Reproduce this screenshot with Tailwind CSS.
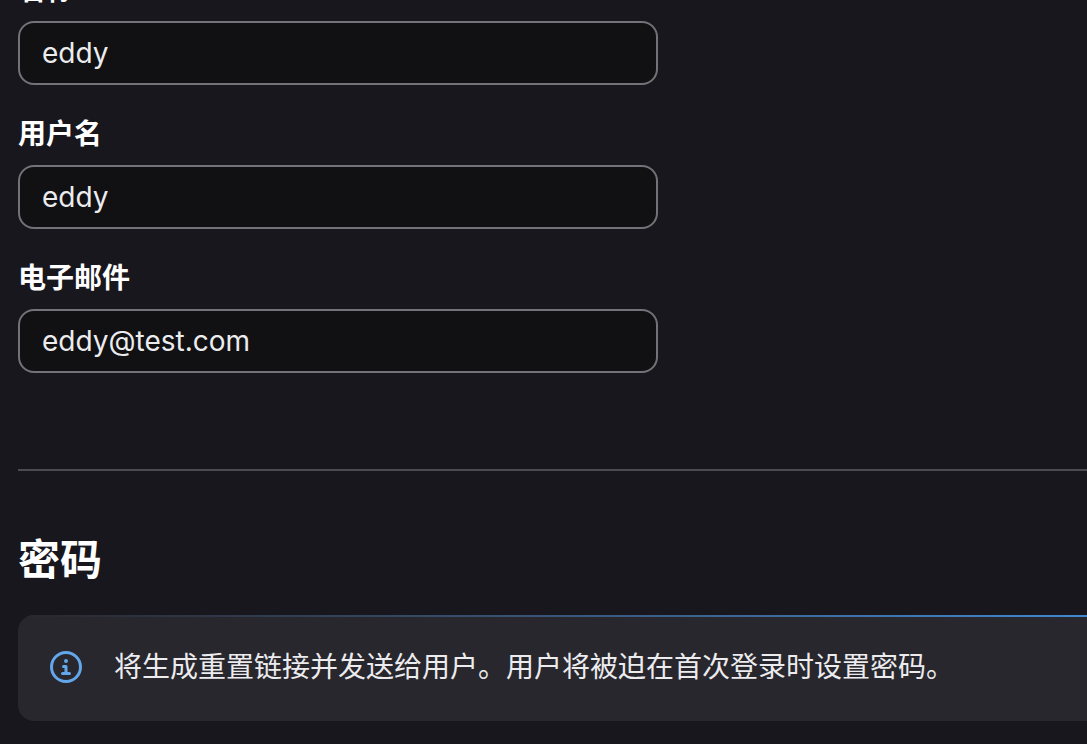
<!DOCTYPE html>
<html lang="zh-CN">
<head>
  <meta charset="UTF-8" />
  <meta name="viewport" content="width=device-width, initial-scale=1.0" />
  <title>用户</title>
  <script src="https://cdn.jsdelivr.net/npm/@tailwindcss/browser@4"></script>
</head>
<body class="bg-[#18171d] text-[#ececef] min-h-screen overflow-hidden font-['Inter','Noto_Sans_CJK_SC',sans-serif] text-[28px] leading-10">

  <main class="-mt-[30px] pl-[18px]">
    <form>
      <fieldset class="max-w-[640px] space-y-[29px]">
        <div>
          <label for="name" class="block mb-[11px] font-bold text-white">名称</label>
          <input type="text" id="name" name="name" value="eddy" class="block w-full h-16 px-[22px] bg-[#111113] border-2 border-[#737278] rounded-2xl" />
        </div>

        <div>
          <label for="username" class="block mb-[11px] font-bold text-white">用户名</label>
          <input type="text" id="username" name="username" value="eddy" class="block w-full h-16 px-[22px] bg-[#111113] border-2 border-[#737278] rounded-2xl" />
        </div>

        <div>
          <label for="email" class="block mb-[11px] font-bold text-white">电子邮件</label>
          <input type="email" id="email" name="email" value="eddy@test.com" class="block w-full h-16 px-[22px] bg-[#111113] border-2 border-[#737278] rounded-2xl" />
        </div>
      </fieldset>

      <section class="mt-24 pt-[65px] border-t-2 border-[#4c4b51]">
        <h2 class="text-[42px] leading-12 font-bold text-white">密码</h2>

        <div class="mt-[31px] rounded-l-2xl overflow-hidden bg-[#28272d]">
          <div class="h-0.5 bg-linear-to-r from-[#28272d] to-[#3f88d1]"></div>
          <div class="flex gap-8 px-8 pt-[30px] pb-[34px]">
            <svg class="size-8 mt-1 shrink-0 text-[#63a6e9]" viewBox="0 0 16 16" fill="currentColor" aria-hidden="true">
              <path fill-rule="evenodd" d="M8 14.5a6.5 6.5 0 1 0 0-13 6.5 6.5 0 0 0 0 13zM8 16A8 8 0 1 0 8 0a8 8 0 0 0 0 16zM9 5a1 1 0 1 1-2 0 1 1 0 0 1 2 0zM6.75 7a.75.75 0 0 0 0 1.5h.5V10.500h-1a.75.75 0 0 0 0 1.500h3.500a.75.75 0 0 0 0-1.500h-1V7.750A.75.75 0 0 0 8 7z" clip-rule="evenodd" />
            </svg>
            <p>将生成重置链接并发送给用户。用户将被迫在首次登录时设置密码。</p>
          </div>
        </div>
      </section>
    </form>
  </main>

</body>
</html>
